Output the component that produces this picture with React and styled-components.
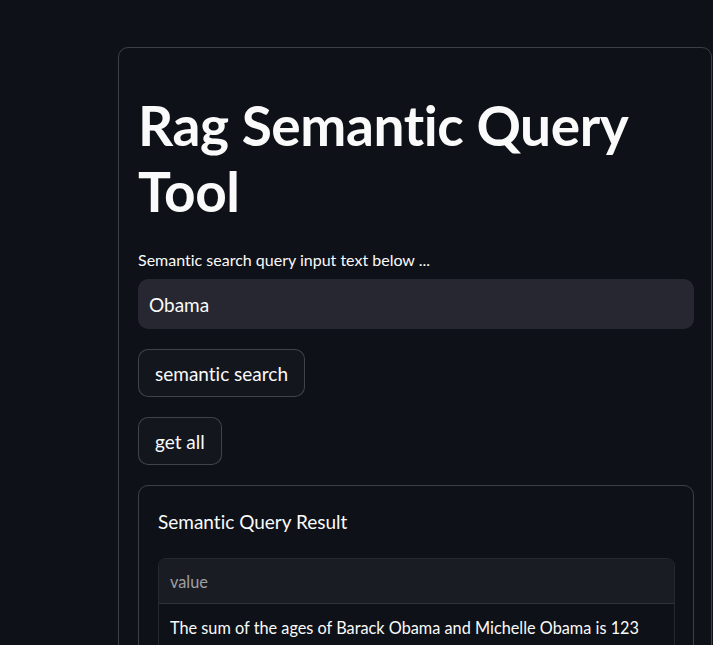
import styled, { createGlobalStyle } from 'styled-components';

const GlobalStyle = createGlobalStyle`
    html, body {
        margin: 0;
        padding: 0;
        background-color: #0e1117;
        color: #fafafa;
        font-family: Lato, "Noto Sans", sans-serif;
        font-variant-ligatures: none;
    }
`;

const Page = styled.div`
    width: 713px;
    height: 645px;
    overflow: hidden;
    padding: 47px 0 0 118px;
    box-sizing: border-box;
`;

const Card = styled.div`
    border: 1px solid rgba(250, 250, 250, 0.2);
    border-radius: 10px;
    padding: 20px 17px 20px 19px;
    width: 594px;
    box-sizing: border-box;
    display: flex;
    flex-direction: column;
    gap: 20px;
`;

const Title = styled.h1`
    margin: 0;
    padding: 24px 0 5px;
    font-size: 55px;
    line-height: 66px;
    font-weight: 700;
    letter-spacing: -0.4px;
`;

const Field = styled.div`
    display: flex;
    flex-direction: column;
`;

const Label = styled.label`
    font-size: 16px;
    line-height: 22px;
    margin-bottom: 8px;
`;

const Input = styled.div`
    height: 50px;
    background-color: #262730;
    border-radius: 10px;
    padding: 0 11px;
    display: flex;
    align-items: center;
    font-size: 19px;
`;

const Button = styled.button`
    align-self: flex-start;
    height: 48px;
    padding: 0 16px;
    background-color: #13161d;
    border: 1px solid rgba(250, 250, 250, 0.2);
    border-radius: 10px;
    color: #fafafa;
    font-family: inherit;
    font-variant-ligatures: none;
    font-size: 19px;
`;

const ResultCard = styled.div`
    border: 1px solid rgba(250, 250, 250, 0.2);
    border-radius: 10px;
    padding: 20px 18px 40px 19px;
    display: flex;
    flex-direction: column;
    gap: 20px;
`;

const ResultTitle = styled.div`
    font-size: 19px;
    line-height: 32px;
`;

const Table = styled.div`
    border: 1px solid rgba(250, 250, 250, 0.1);
    border-radius: 8px;
    overflow: hidden;
`;

const Cell = styled.div`
    height: ${(p) => (p.$head ? '44px' : '46px')};
    padding: 0 11px;
    display: flex;
    align-items: center;
    font-size: 16.3px;
    background-color: ${(p) => (p.$head ? '#1a1c24' : '#0e1117')};
    color: ${(p) => (p.$head ? 'rgba(250, 250, 250, 0.6)' : '#fafafa')};
    border-bottom: 1px solid rgba(250, 250, 250, 0.1);
`;

export default function App() {
    return (
        <Page>
            <GlobalStyle />
            <Card>
                <Title>Rag Semantic Query Tool</Title>
                <Field>
                    <Label>Semantic search query input text below ...</Label>
                    <Input>Obama</Input>
                </Field>
                <Button>semantic search</Button>
                <Button>get all</Button>
                <ResultCard>
                    <ResultTitle>Semantic Query Result</ResultTitle>
                    <Table>
                        <Cell $head>value</Cell>
                        <Cell>The sum of the ages of Barack Obama and Michelle Obama is 123</Cell>
                    </Table>
                </ResultCard>
            </Card>
        </Page>
    );
}
